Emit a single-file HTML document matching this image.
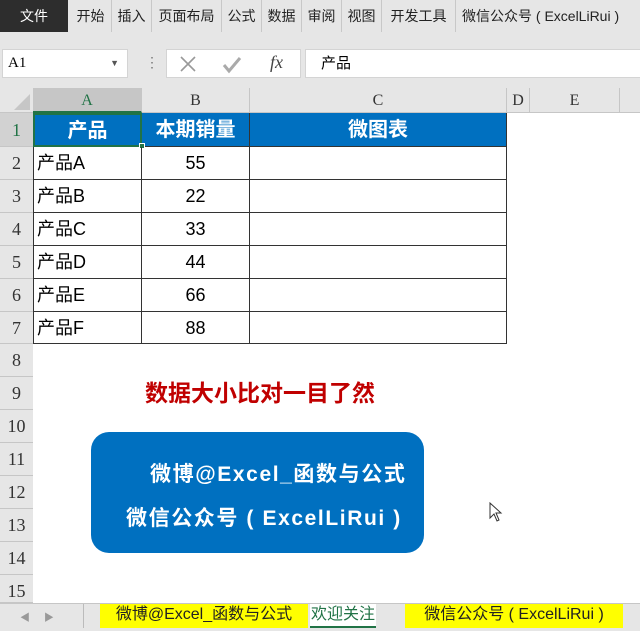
<!DOCTYPE html><html><head><meta charset="utf-8"><style>
*{margin:0;padding:0;box-sizing:border-box}
body{width:640px;height:631px;overflow:hidden;background:#e6e6e6;position:relative;font-family:"Liberation Sans","Noto Sans CJK SC",sans-serif}
.a{position:absolute}
.tab{position:absolute;top:0;height:32px;line-height:32px;font-size:14px;color:#222;border-right:1px solid #c8c8c8;text-align:center}
.ch{position:absolute;top:88px;height:25px;line-height:25px;text-align:center;font-family:"Liberation Serif",serif;font-size:16px;color:#333;border-right:1px solid #c6c6c6}
.rh{position:absolute;left:0;width:33px;text-align:center;font-family:"Liberation Serif",serif;font-size:18px;color:#333;border-bottom:1px solid #c6c6c6;background:#e6e6e6}
.c{position:absolute;height:33px;line-height:33px;font-size:18px;color:#000;border-right:1px solid #333;border-bottom:1px solid #333}
.hd{background:#0070c0;color:#fff;font-weight:bold;text-align:center;font-size:20px}
.st{position:absolute;top:604px;height:24px;line-height:22px;font-size:15px;text-align:center}
</style></head><body>
<div class="a" style="left:0;top:0;width:68px;height:32px;background:#2d2d2d;color:#fff;font-size:14px;line-height:32px;text-align:center">文件</div>
<div class="tab" style="left:70px;width:42px">开始</div>
<div class="tab" style="left:112px;width:40px">插入</div>
<div class="tab" style="left:152px;width:70px">页面布局</div>
<div class="tab" style="left:222px;width:40px">公式</div>
<div class="tab" style="left:262px;width:40px">数据</div>
<div class="tab" style="left:302px;width:40px">审阅</div>
<div class="tab" style="left:342px;width:40px">视图</div>
<div class="tab" style="left:382px;width:74px">开发工具</div>
<div class="tab" style="left:456px;width:184px;border:none;text-align:left;padding-left:6px">微信公众号 ( ExcelLiRui )</div>
<div class="a" style="left:2px;top:49px;width:126px;height:29px;background:#fff;border:1px solid #d4d4d4;font-family:'Liberation Serif',serif;font-size:15px;line-height:27px;padding-left:5px">A1<span style="position:absolute;right:8px;top:0;font-size:9px;color:#555">▼</span></div>
<div class="a" style="left:145px;top:54px;color:#777;font-size:14px">⋮</div>
<div class="a" style="left:166px;top:49px;width:135px;height:29px;background:#fff;border:1px solid #d4d4d4">
<svg width="135" height="29" style="position:absolute;left:0;top:0"><path d="M14 7l14 14M28 7L14 21" stroke="#999" stroke-width="1.6"/><path d="M57 15l5 6 11-13" stroke="#aaa" stroke-width="3" fill="none"/></svg>
<span style="position:absolute;left:103px;top:2px;font-family:'Liberation Serif',serif;font-style:italic;font-size:18px;color:#444">fx</span></div>
<div class="a" style="left:305px;top:49px;width:340px;height:29px;background:#fff;border:1px solid #d4d4d4;font-size:15px;line-height:27px;padding-left:15px">产品</div>
<div class="a" style="left:0;top:88px;width:640px;height:515px;background:#fff"></div>
<div class="a" style="left:0;top:88px;width:640px;height:25px;background:#e6e6e6;border-bottom:1px solid #c6c6c6"></div>
<svg class="a" style="left:10px;top:92px" width="22" height="20"><path d="M20 2V18H4Z" fill="#c6c6c6"/></svg>
<div class="ch" style="left:33px;width:109px;background:#c6c6c6;color:#217346;border-bottom:2px solid #217346">A</div>
<div class="ch" style="left:142px;width:108px">B</div>
<div class="ch" style="left:250px;width:257px">C</div>
<div class="ch" style="left:507px;width:23px">D</div>
<div class="ch" style="left:530px;width:90px">E</div>
<div class="a" style="left:0;top:113px;width:33px;height:490px;background:#e6e6e6;border-right:1px solid #c6c6c6"></div>
<div class="rh" style="top:113px;height:34px;line-height:34px;background:#d2d2d2;color:#217346">1</div>
<div class="rh" style="top:147px;height:33px;line-height:33px">2</div>
<div class="rh" style="top:180px;height:33px;line-height:33px">3</div>
<div class="rh" style="top:213px;height:33px;line-height:33px">4</div>
<div class="rh" style="top:246px;height:33px;line-height:33px">5</div>
<div class="rh" style="top:279px;height:33px;line-height:33px">6</div>
<div class="rh" style="top:312px;height:32px;line-height:32px">7</div>
<div class="rh" style="top:344px;height:33px;line-height:33px">8</div>
<div class="rh" style="top:377px;height:33px;line-height:33px">9</div>
<div class="rh" style="top:410px;height:33px;line-height:33px">10</div>
<div class="rh" style="top:443px;height:33px;line-height:33px">11</div>
<div class="rh" style="top:476px;height:33px;line-height:33px">12</div>
<div class="rh" style="top:509px;height:33px;line-height:33px">13</div>
<div class="rh" style="top:542px;height:33px;line-height:33px">14</div>
<div class="rh" style="top:575px;height:28px;line-height:33px">15</div>
<div class="c hd" style="left:33px;top:113px;width:109px;height:34px;line-height:32px;border:2px solid #217346">产品</div>
<div class="c hd" style="left:142px;top:113px;width:108px;height:34px;line-height:34px">本期销量</div>
<div class="c hd" style="left:250px;top:113px;width:257px;height:34px;line-height:34px">微图表</div>
<div class="a" style="left:139px;top:143px;width:6px;height:6px;background:#217346;border:1px solid #fff"></div>
<div style="position:absolute;left:33px;top:147px">
<div class="c" style="left:0;top:0;width:109px;padding-left:4px">产品A</div><div class="c" style="left:109px;top:0;width:108px;text-align:center">55</div><div class="c" style="left:217px;top:0;width:257px"></div>
<div class="c" style="left:0;top:33px;width:109px;padding-left:4px">产品B</div><div class="c" style="left:109px;top:33px;width:108px;text-align:center">22</div><div class="c" style="left:217px;top:33px;width:257px"></div>
<div class="c" style="left:0;top:66px;width:109px;padding-left:4px">产品C</div><div class="c" style="left:109px;top:66px;width:108px;text-align:center">33</div><div class="c" style="left:217px;top:66px;width:257px"></div>
<div class="c" style="left:0;top:99px;width:109px;padding-left:4px">产品D</div><div class="c" style="left:109px;top:99px;width:108px;text-align:center">44</div><div class="c" style="left:217px;top:99px;width:257px"></div>
<div class="c" style="left:0;top:132px;width:109px;padding-left:4px">产品E</div><div class="c" style="left:109px;top:132px;width:108px;text-align:center">66</div><div class="c" style="left:217px;top:132px;width:257px"></div>
<div class="c" style="left:0;top:165px;width:109px;padding-left:4px;height:32px;line-height:32px">产品F</div><div class="c" style="left:109px;top:165px;width:108px;text-align:center;height:32px;line-height:32px">88</div><div class="c" style="left:217px;top:165px;width:257px;height:32px"></div>
</div>
<div class="a" style="left:33px;top:147px;width:1px;height:197px;background:#333"></div>
<div class="a" style="left:145px;top:378px;color:#c00000;font-weight:bold;font-size:23px;line-height:30px;white-space:nowrap">数据大小比对一目了然</div>
<div class="a" style="left:91px;top:432px;width:333px;height:121px;background:#0070c0;border-radius:18px;color:#fff;font-weight:bold;font-size:21px;white-space:nowrap;letter-spacing:1.6px">
<div style="position:absolute;left:59px;top:26px">微博@Excel_函数与公式</div>
<div style="position:absolute;left:35px;top:70px">微信公众号 ( ExcelLiRui )</div></div>
<svg class="a" style="left:489px;top:502px" width="14" height="20"><path d="M1 1V16L5 12L8 19L10 18L7 11H12Z" fill="#fff" stroke="#333"/></svg>
<div class="a" style="left:0;top:603px;width:640px;height:28px;background:#e6e6e6;border-top:1px solid #c6c6c6"></div>
<div class="a" style="left:20px;top:609px;font-size:10px;color:#999">◀ &nbsp;&nbsp;&nbsp; ▶</div>
<div class="st" style="left:83px;top:604px;width:1px;height:24px;background:#bbb"></div>
<div class="st" style="left:100px;width:208px;background:#ffff00;color:#222;font-size:16px">微博@Excel_函数与公式</div>
<div class="st" style="left:310px;width:66px;background:#fff;color:#217346;border-bottom:2px solid #217346;font-size:16px">欢迎关注</div>
<div class="st" style="left:405px;width:218px;background:#ffff00;color:#222;font-size:16px">微信公众号 ( ExcelLiRui )</div>
</body></html>
